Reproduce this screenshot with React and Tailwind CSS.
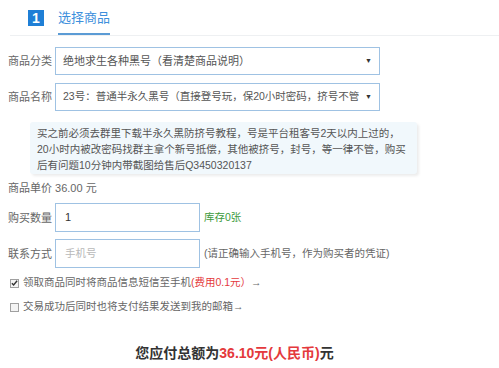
import React from 'react';

const labelCls = 'w-[47px] shrink-0 text-[11px] text-[#666] leading-[16px]';

const Check = ({ checked }) => (
  <span className="w-[9px] h-[9px] border border-[#a0a0a0] bg-[#f4f4f4] flex items-center justify-center shrink-0">
    {checked && (
      <svg width="8" height="8" viewBox="0 0 8 8">
        <path d="M1 4.2 L3 6.3 L7 1.5" stroke="#333" strokeWidth="1.6" fill="none" />
      </svg>
    )}
  </span>
);

const App = () => {
  return (
    <div
      className="w-[499px] h-[368px] bg-white overflow-hidden"
      style={{ fontFamily: '"Liberation Sans", "Noto Sans CJK SC", sans-serif' }}
    >
      {/* header */}
      <div className="h-[36px] ml-[10px] border-b border-[#eef0f2] flex items-start pt-[10px] pl-[18px]">
        <span className="w-[16px] h-[16px] bg-[#1f7fd6] text-white text-[14px] font-bold leading-[16px] flex items-center justify-center">
          1
        </span>
        <span className="ml-[14px] text-[13px] leading-[16px] text-[#3d8fdc] pb-[7px] border-b-2 border-[#5b9bd5]">
          选择商品
        </span>
      </div>

      <div className="pl-[8px]">
        <div className="flex items-center mt-[11px]">
          <span className={labelCls}>商品分类</span>
          <div className="w-[325px] h-[28px] border border-[#9fc2e3] flex items-center justify-between pl-[7px] pr-[7px]">
            <span className="text-[11px] text-[#555]">绝地求生各种黑号（看清楚商品说明）</span>
            <span className="text-[7px] text-[#333]">▼</span>
          </div>
        </div>

        <div className="flex items-center mt-[8px]">
          <span className={labelCls}>商品名称</span>
          <div className="w-[325px] h-[28px] border border-[#9fc2e3] flex items-center justify-between pl-[7px] pr-[7px]">
            <span className="flex-1 min-w-0 text-[10.5px] text-[#555] whitespace-nowrap overflow-hidden">
              23号：普通半永久黑号（直接登号玩，保20小时密码，挤号不管
            </span>
            <span className="text-[7px] text-[#333] ml-[4px] shrink-0">▼</span>
          </div>
        </div>

        <div className="ml-[22px] mt-[11px] w-[387px] bg-[#f1f8fc] rounded-[3px] shadow-[2px_2px_3px_rgba(0,0,0,0.08)] pt-[3px] pb-[1px] pl-[7px] text-[10.5px] leading-[16px] text-[#555] whitespace-nowrap">
          买之前必须去群里下载半永久黑防挤号教程，号是平台租客号2天以内上过的，
          <br />
          20小时内被改密码找群主拿个新号抵偿，其他被挤号，封号，等一律不管，购买
          <br />
          后有问题10分钟内带截图给售后Q3450320137
        </div>

        <div className="mt-[6px] text-[11px] leading-[16px] text-[#666]">商品单价 36.00 元</div>

        <div className="flex items-center mt-[7px]">
          <span className={labelCls}>购买数量</span>
          <div className="w-[145px] h-[29px] border border-[#9fc2e3] flex items-center pl-[9px] text-[11px] text-[#333]">
            1
          </div>
          <span className="ml-[4px] text-[10.5px] text-[#3b9a3b]">库存0张</span>
        </div>

        <div className="flex items-center mt-[7px]">
          <span className={labelCls}>联系方式</span>
          <div className="w-[145px] h-[29px] border border-[#9fc2e3] flex items-center pl-[9px] text-[10.5px] text-[#b8b8b8]">
            手机号
          </div>
          <span className="ml-[4px] text-[10.5px] text-[#666]">(请正确输入手机号，作为购买者的凭证)</span>
        </div>

        <div className="flex items-center mt-[7px] pl-[2px] h-[16px]">
          <Check checked />
          <span className="ml-[4px] text-[10.5px] text-[#666]">
            领取商品同时将商品信息短信至手机<span className="text-[#e4393c]">(费用0.1元）</span>→
          </span>
        </div>

        <div className="flex items-center mt-[8px] pl-[2px] h-[16px]">
          <Check />
          <span className="ml-[4px] text-[10.5px] text-[#666]">交易成功后同时也将支付结果发送到我的邮箱→</span>
        </div>
      </div>

      <div className="w-[469px] mt-[28px] text-center text-[14px] leading-[20px] font-bold text-[#333]">
        您应付总额为<span className="text-[#e4393c]">36.10元(人民币)</span>元
      </div>
    </div>
  );
};

export default App;
